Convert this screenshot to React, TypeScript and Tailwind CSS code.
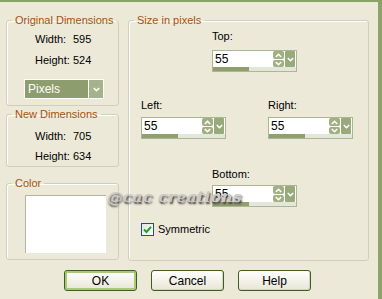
import React from "react";

function Chevron({ up = false }: { up?: boolean }) {
  return (
    <svg width="7" height="5" viewBox="0 0 7 5" className="block">
      <path
        d={up ? "M0.8 4 L3.5 1.3 L6.2 4" : "M0.8 1 L3.5 3.7 L6.2 1"}
        fill="none"
        stroke="#ffffff"
        strokeWidth="1.6"
      />
    </svg>
  );
}

function Spin({ value, fill = 36 }: { value: string; fill?: number }) {
  return (
    <div className="flex h-[22px] w-[85px] flex-col border border-[#a9b893] bg-white">
      <div className="flex h-[16px] items-center">
        <span className="flex-1 pl-[2px] text-[12px] leading-none text-black">{value}</span>
        <div className="flex h-[16px] w-[11px] flex-col gap-[1px]">
          <div className="flex h-[8px] items-center justify-center rounded-[2px] bg-[#a0b083]">
            <Chevron up />
          </div>
          <div className="flex h-[7px] items-center justify-center rounded-[2px] bg-[#a0b083]">
            <Chevron />
          </div>
        </div>
        <div className="mx-[1px] flex h-[16px] w-[10px] items-center justify-center rounded-[1px] bg-[#98a97a]">
          <Chevron />
        </div>
      </div>
      <div className="flex h-[4px] bg-[#e5e6da]">
        <div className="h-full bg-[#8f9f6e]" style={{ width: fill }} />
      </div>
    </div>
  );
}

function Group({
  title,
  className,
  children,
}: {
  title: string;
  className?: string;
  children: React.ReactNode;
}) {
  return (
    <fieldset
      className={
        "rounded-[3px] border border-[#d0cfbe] shadow-[inset_1px_1px_0_#ffffff] " +
        (className ?? "")
      }
    >
      <legend className="ml-[5px] whitespace-nowrap px-[3px] text-[11px] leading-[14px] text-[#a4520b]">
        {title}
      </legend>
      {children}
    </fieldset>
  );
}

function Row({ label, value }: { label: string; value: string }) {
  return (
    <div className="flex h-[14px] items-center whitespace-nowrap pl-[28px] text-[11px] leading-[14px] text-black">
      <span className="w-[38px]">{label}</span>
      <span>{value}</span>
    </div>
  );
}

function Button({ label, primary = false }: { label: string; primary?: boolean }) {
  return (
    <div
      className={
        "flex h-[21px] w-[73px] items-center justify-center rounded-[3px] border border-[#3e5d20] bg-linear-to-b from-white to-[#e8e6d6] text-[12px] text-black " +
        (primary
          ? "shadow-[inset_0_0_0_2px_#a9c879]"
          : "shadow-[inset_-1px_-1px_0_#d6d3c0]")
      }
    >
      {label}
    </div>
  );
}

export default function App() {
  return (
    <div className="relative h-[299px] w-[382px] overflow-hidden border-t-2 border-r-4 border-[#8aa468] bg-[#ece9d8] font-['Liberation_Sans',Arial,sans-serif]">
      <div className="flex gap-[9px] pl-[6px] pt-[11px]">
        {/* left column */}
        <div className="flex w-[113px] flex-col">
          <Group title="Original Dimensions" className="pb-[6px]">
            <div className="flex flex-col gap-[7px] pt-[5px]">
              <Row label="Width:" value="595" />
              <Row label="Height:" value="524" />
            </div>
            <div className="ml-[17px] mt-[12px] flex h-[20px] w-[80px] border border-white bg-[#8e9d6d]">
              <span className="flex-1 pl-[3px] text-[12px] leading-[18px] text-white">Pixels</span>
              <div className="flex w-[15px] items-center justify-center border-l border-white bg-[#a4b38b]">
                <Chevron />
              </div>
            </div>
          </Group>
          <Group title="New Dimensions" className="mt-[1px] pb-[3px]">
            <div className="flex flex-col gap-[6px] pt-[8px]">
              <Row label="Width:" value="705" />
              <Row label="Height:" value="634" />
            </div>
          </Group>
          <Group title="Color" className="mt-[9px] pb-[6px]">
            <div className="ml-[18px] mt-[5px] h-[58px] w-[81px] border-l border-t border-[#b5b4a4] bg-white" />
          </Group>
        </div>

        {/* right group */}
        <Group title="Size in pixels" className="h-[248px] w-[241px]">
          <div className="flex flex-col pl-[12px] pt-[2px] text-[11px] leading-[14px] text-black">
            <div className="ml-[71px]">Top:</div>
            <div className="ml-[71px] mt-[7px]">
              <Spin value="55" />
            </div>
            <div className="mt-[26px] flex gap-[42px]">
              <div className="flex flex-col gap-[5px]">
                <span>Left:</span>
                <Spin value="55" />
              </div>
              <div className="flex flex-col gap-[5px]">
                <span>Right:</span>
                <Spin value="55" />
              </div>
            </div>
            <div className="ml-[71px] mt-[28px]">Bottom:</div>
            <div className="ml-[71px] mt-[4px]">
              <Spin value="55" />
            </div>
            <div className="mt-[15px] flex items-center gap-[4px]">
              <div className="flex h-[13px] w-[13px] items-center justify-center border border-[#1c5180] bg-linear-to-br from-[#e4e4dd] to-white">
                <svg width="9" height="9" viewBox="0 0 9 9">
                  <path d="M1 4.5 L3.5 7 L8 1.8" fill="none" stroke="#21a121" strokeWidth="2" />
                </svg>
              </div>
              <span>Symmetric</span>
            </div>
          </div>
        </Group>
      </div>

      <div className="mt-[9px] flex gap-[14px] pl-[64px]">
        <Button label="OK" primary />
        <Button label="Cancel" />
        <Button label="Help" />
      </div>

      {/* watermark */}
      <div className="pointer-events-none absolute left-[107px] top-[183px] font-['DejaVu_Serif',serif] text-[15.5px] font-bold italic tracking-[0.3px] text-[#c9c9c9] [text-shadow:1px_2px_2px_#3a3a3a]">
        @cac creations
      </div>
    </div>
  );
}
